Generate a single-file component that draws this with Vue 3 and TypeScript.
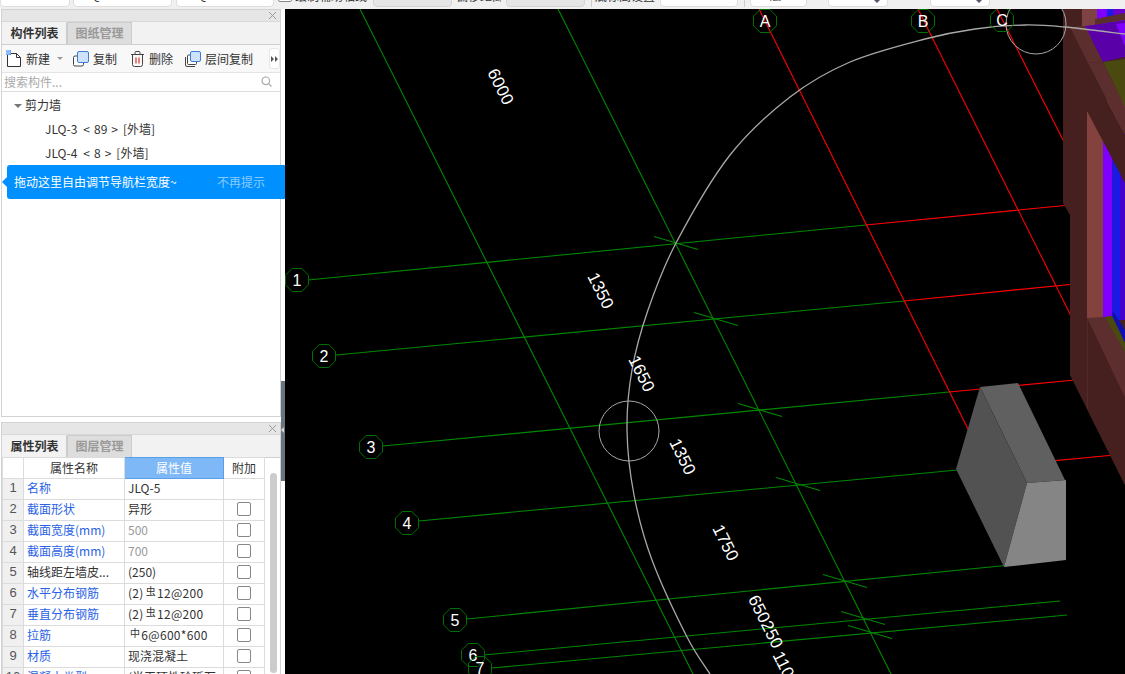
<script setup lang="ts">
interface TopItem {
  kind: string
  width: number
  gap: number
  text?: string
}
interface PropRow {
  no: number
  name: string
  value: string
  prefix?: string
  mark?: string
  link: boolean
  muted?: boolean
  check: boolean
}
type Pt = [number, number]

const topItems: TopItem[] = [
  { kind: 'input', width: 70, gap: 0 },
  { kind: 'input', width: 99, gap: 3, text: 'JLQ-5' },
  { kind: 'input', width: 98, gap: 4, text: '      Q' },
  { kind: 'check', width: 14, gap: 4 },
  { kind: 'label', width: 73, gap: 3, text: '绘制辅助轴线' },
  { kind: 'gray', width: 79, gap: 5 },
  { kind: 'label', width: 45, gap: 4, text: '偏移距离' },
  { kind: 'gray', width: 79, gap: 5 },
  { kind: 'sep', width: 1, gap: 6 },
  { kind: 'label', width: 60, gap: 3, text: '底标高设置' },
  { kind: 'input', width: 78, gap: 5 },
  { kind: 'sep', width: 1, gap: 6 },
  { kind: 'input', width: 57, gap: 5, text: '  4 层' },
  { kind: 'select', width: 60, gap: 21 },
  { kind: 'select', width: 60, gap: 42 }
]

const rows: PropRow[] = [
  { no: 1, name: '名称', value: 'JLQ-5', link: true, check: false },
  { no: 2, name: '截面形状', value: '异形', link: true, check: true },
  { no: 3, name: '截面宽度(mm)', value: '500', link: true, muted: true, check: true },
  { no: 4, name: '截面高度(mm)', value: '700', link: true, muted: true, check: true },
  { no: 5, name: '轴线距左墙皮...', value: '(250)', link: false, check: true },
  { no: 6, name: '水平分布钢筋', value: '12@200', prefix: '(2)', mark: '虫', link: true, check: true },
  { no: 7, name: '垂直分布钢筋', value: '12@200', prefix: '(2)', mark: '虫', link: true, check: true },
  { no: 8, name: '拉筋', value: '6@600*600', mark: '中', link: true, check: true },
  { no: 9, name: '材质', value: '现浇混凝土', link: true, check: true },
  { no: 10, name: '混凝土类型', value: '(半干硬性砼砾石...', link: true, check: true }
]

const gridLabels = [
  { t: 'A', x: 765, y: 21 },
  { t: 'B', x: 923, y: 21 },
  { t: 'C', x: 1002, y: 20 },
  { t: '1', x: 297, y: 280 },
  { t: '2', x: 324, y: 356 },
  { t: '3', x: 371, y: 447 },
  { t: '4', x: 407, y: 523 },
  { t: '5', x: 455, y: 620 },
  { t: '6', x: 473, y: 655 },
  { t: '7', x: 480, y: 668 }
]

const greenLines: number[][] = [
  [360, 9, 693, 674],
  [558, 9, 891, 674],
  [308, 280, 866, 225],
  [336, 355, 904, 301],
  [383, 446, 949, 392],
  [419, 521, 989, 467],
  [467, 619, 1030, 563],
  [484, 655, 1060, 601],
  [492, 668, 1067, 615]
]

const redLines: number[][] = [
  [759, 9, 970, 433],
  [918, 9, 1072, 318],
  [997, 9, 1066, 146],
  [866, 225, 1070, 205],
  [904, 301, 1075, 284],
  [949, 392, 1075, 380],
  [989, 467, 1125, 454]
]

const ticks: Pt[] = [
  [676, 243],
  [716, 319],
  [760, 410],
  [798, 484],
  [845, 581],
  [863, 618],
  [870, 632]
]

const dims = [
  { t: '6000', x: 500, y: 87 },
  { t: '1350', x: 600, y: 291 },
  { t: '1650', x: 641, y: 374 },
  { t: '1350', x: 682, y: 457 },
  { t: '1750', x: 725, y: 543 },
  { t: '650250', x: 765, y: 622 },
  { t: '1100', x: 785, y: 669 }
]

// arc through points read off the picture, smoothed with catmull-rom
const arcPts: Pt[] = [
  [1125, 34], [1065, 27], [1025, 25], [975, 29], [925, 39], [850, 62], [790, 97],
  [730, 155], [676, 243], [648, 310], [632, 370], [627, 430], [634, 495],
  [652, 560], [687, 637], [710, 674]
]

const arcPath = arcPts.reduce((d, p, i) => {
  if (i === 0) return `M${p[0]} ${p[1]}`
  const a = arcPts[Math.max(i - 2, 0)]
  const b = arcPts[i - 1]
  const c = arcPts[Math.min(i + 1, arcPts.length - 1)]
  const c1x = b[0] + (p[0] - a[0]) / 6
  const c1y = b[1] + (p[1] - a[1]) / 6
  const c2x = p[0] - (c[0] - b[0]) / 6
  const c2y = p[1] - (c[1] - b[1]) / 6
  return `${d} C${c1x} ${c1y} ${c2x} ${c2y} ${p[0]} ${p[1]}`
}, '')

const octagon = (x: number, y: number) => {
  const pts: string[] = []
  for (let i = 0; i < 8; i++) {
    const a = (Math.PI / 4) * i + Math.PI / 8
    pts.push(`${(x + 12.5 * Math.cos(a)).toFixed(1)},${(y + 12.5 * Math.sin(a)).toFixed(1)}`)
  }
  return pts.join(' ')
}
</script>

<template>
  <div class="app">
    <div class="topbar">
      <div class="top-row">
        <div
          v-for="(item, i) in topItems"
          :key="i"
          class="top-item"
          :class="item.kind"
          :style="{ width: item.width + 'px', marginLeft: item.gap + 'px' }"
        >
          {{ item.text }}
          <i v-if="item.kind === 'select'" class="caret"></i>
        </div>
      </div>
    </div>

    <div class="main">
      <aside class="sidebar">
        <section class="panel panel-list">
          <div class="panel-head">
            <svg class="close" width="9" height="9" viewBox="0 0 9 9"><path d="M1 1l7 7M8 1l-7 7" /></svg>
          </div>
          <div class="tabs">
            <div class="tab active">构件列表</div>
            <div class="tab">图纸管理</div>
          </div>
          <div class="actions">
            <button class="act act-new">
              <svg width="16" height="18" viewBox="0 0 16 18">
                <path d="M1.500 3.500h9l4 4v9h-13z" fill="#fff" stroke="#333" />
                <path d="M10.500 3.500v4h4" fill="none" stroke="#333" />
                <rect x="0" y="0" width="5" height="5" fill="#3d8bf0" />
                <path d="M1 0v5M3 0v5M0 1h5M0 3h5" stroke="#cfe3ff" stroke-width=".7" />
              </svg>
              新建<i class="drop"></i>
            </button>
            <button class="act act-copy">
              <svg width="16" height="16" viewBox="0 0 16 16">
                <rect x=".5" y="5" width="10" height="10" rx="1.500" fill="#fff" stroke="#444" />
                <rect x="4.500" y=".5" width="11" height="11" rx="1.500" fill="#cfe2fb" stroke="#3b7dd8" />
              </svg>
              复制
            </button>
            <button class="act act-del">
              <svg width="15" height="16" viewBox="0 0 15 16">
                <path d="M1 3.500h13M5 3.500V1.500a1 1 0 0 1 1-1h3a1 1 0 0 1 1 1v2M2.500 3.500v10a2 2 0 0 0 2 2h6a2 2 0 0 0 2-2v-10" fill="none" stroke="#444" />
                <path d="M6 6.500v6M9 6.500v6" stroke="#d9342b" stroke-width="1.200" />
              </svg>
              删除
            </button>
            <button class="act act-floor">
              <svg width="16" height="16" viewBox="0 0 16 16">
                <path d="M.5 6v8a1.500 1.500 0 0 0 1.500 1.500h8" fill="none" stroke="#444" />
                <rect x="2.500" y="4" width="9" height="9.500" rx="1" fill="#fff" stroke="#444" />
                <rect x="5.500" y=".5" width="10" height="10" rx="1.500" fill="#cfe2fb" stroke="#3b7dd8" />
              </svg>
              层间复制
            </button>
            <span class="more">
              <svg width="7" height="6" viewBox="0 0 7 6"><path d="M0 0l3 3-3 3zM4 0l3 3-3 3z" /></svg>
            </span>
          </div>
          <div class="search">
            <span>搜索构件...</span>
            <svg width="11" height="11" viewBox="0 0 11 11">
              <circle cx="4.800" cy="4.800" r="3.800" />
              <path d="M7.700 7.700l2.800 2.800" />
            </svg>
          </div>
          <div class="tree">
            <div class="tree-group"><i class="tree-arrow"></i>剪力墙</div>
            <div class="tree-item"><span>JLQ-3</span><span class="qty">&lt;<span>89</span>&gt;</span><span>[外墙]</span></div>
            <div class="tree-item"><span>JLQ-4</span><span class="qty">&lt;<span>8</span>&gt;</span><span>[外墙]</span></div>
          </div>
        </section>

        <section class="panel panel-props">
          <div class="panel-head">
            <svg class="close" width="9" height="9" viewBox="0 0 9 9"><path d="M1 1l7 7M8 1l-7 7" /></svg>
          </div>
          <div class="tabs">
            <div class="tab active">属性列表</div>
            <div class="tab">图层管理</div>
          </div>
          <div class="prop-body">
            <table class="props">
              <colgroup>
                <col class="c-no" />
                <col class="c-name" />
                <col class="c-val" />
                <col class="c-add" />
              </colgroup>
              <thead>
                <tr>
                  <th class="no-head"></th>
                  <th>属性名称</th>
                  <th class="val-head">属性值</th>
                  <th>附加</th>
                </tr>
              </thead>
              <tbody>
                <tr v-for="row in rows" :key="row.no">
                  <td class="no">{{ row.no }}</td>
                  <td class="name" :class="{ link: row.link }">{{ row.name }}</td>
                  <td class="val" :class="{ muted: row.muted }">
                    <template v-if="row.mark">
                      <span class="rebar">{{ row.prefix }}<sup>{{ row.mark }}</sup>{{ row.value }}</span>
                    </template>
                    <template v-else>{{ row.value }}</template>
                  </td>
                  <td class="add"><span v-if="row.check" class="box"></span></td>
                </tr>
              </tbody>
            </table>
            <div class="track"><div class="thumb"></div></div>
          </div>
        </section>

        <div class="hint">
          <span>拖动这里自由调节导航栏宽度~</span>
          <span class="hint-off">不再提示</span>
        </div>
        <div class="handle"></div>
      </aside>

      <div class="canvas">
        <svg width="840" height="665" viewBox="285 9 840 665">
          <rect x="285" y="9" width="840" height="665" fill="#000" />
          <line v-for="(l, i) in greenLines" :key="'g' + i" :x1="l[0]" :y1="l[1]" :x2="l[2]" :y2="l[3]" class="green" />
          <line v-for="(l, i) in redLines" :key="'r' + i" :x1="l[0]" :y1="l[1]" :x2="l[2]" :y2="l[3]" class="red" />
          <line
            v-for="(t, i) in ticks"
            :key="'t' + i"
            :x1="t[0] - 22"
            :y1="t[1] - 6.500"
            :x2="t[0] + 22"
            :y2="t[1] + 6.500"
            class="green"
          />

          <!-- wall on the right -->
          <polygon points="1063,9 1125,9 1125,485 1070,375 1070,215 1063,203" fill="#45201f" />
          <rect x="1082" y="9" width="15" height="30" fill="#7f4242" />
          <rect x="1097" y="9" width="10" height="20" fill="#8000ff" />
          <rect x="1107" y="9" width="6" height="20" fill="#1a1ae6" />
          <rect x="1113" y="9" width="12" height="20" fill="#6a00d0" />
          <polygon points="1095,19 1125,13 1125,20 1095,25" fill="#5a2e2d" />
          <rect x="1087" y="100" width="38" height="220" fill="#84423f" />
          <rect x="1103" y="130" width="22" height="190" fill="#8000ff" />
          <rect x="1112" y="130" width="1" height="190" fill="#3a10c0" />
          <rect x="1113" y="130" width="7" height="190" fill="#1a1ae6" />
          <rect x="1120" y="130" width="5" height="190" fill="#4400cc" />
          <polygon points="1112,316 1113,311 1125,330 1125,343" fill="#1010b0" />
          <polygon points="1070,27 1085,26 1103,62 1088,63" fill="#5c2e2e" />
          <polygon points="1085,26 1125,21 1125,57 1103,62" fill="#5a00a8" />
          <polygon points="1116,24 1125,23 1125,46" fill="#8000ff" />
          <polygon points="1103,62 1125,59 1125,107" fill="#4a4a10" />
          <polygon points="1088,63 1103,62 1125,107 1125,135" fill="#5c2e2e" />
          <polygon points="1087,63 1125,135 1125,183 1087,111" fill="#45201f" />
          <polygon points="1087,318 1105,317 1112,316 1125,343 1125,398" fill="#5c2e2e" />
          <polygon points="1105,317 1112,316 1125,343 1125,352" fill="#4a4a10" />
          <polygon points="1087,318 1125,398 1125,485 1087,409" fill="#45201f" />
          <line x1="1087.500" y1="318" x2="1087.500" y2="409" stroke="#522a2a" />

          <!-- gray block -->
          <polygon points="980,387 1018,383 1065,480 1027,483" fill="#606060" />
          <polygon points="980,387 1027,483 1004,567 956,469" fill="#525252" />
          <polygon points="1027,483 1066,480 1066,560 1004,567" fill="#858585" />

          <path :d="arcPath" class="arc" />
          <circle cx="629" cy="431" r="30" class="ring" />
          <circle cx="1036" cy="24" r="30" class="ring" />

          <g v-for="g in gridLabels" :key="g.t">
            <polygon :points="octagon(g.x, g.y)" class="oct" />
            <text :x="g.x" :y="g.y + 6" class="axis-text">{{ g.t }}</text>
          </g>
          <text
            v-for="d in dims"
            :key="d.t + d.x"
            :x="d.x"
            :y="d.y + 5"
            :transform="`rotate(63.4 ${d.x} ${d.y})`"
            class="dim-text"
          >{{ d.t }}</text>
        </svg>
      </div>
    </div>
  </div>
</template>

<style scoped>
.app {
  width: 1125px;
  height: 674px;
  overflow: hidden;
  display: flex;
  flex-direction: column;
  font-family: "Noto Sans CJK SC", "Liberation Sans", sans-serif;
  font-size: 12px;
  color: #333;
  background: #fff;
}

.topbar {
  height: 9px;
  flex: none;
  overflow: hidden;
  background: #f0f0f0;
}

.top-row {
  display: flex;
  align-items: flex-end;
  height: 7px;
}

.top-item {
  flex: none;
  box-sizing: border-box;
  height: 24px;
  line-height: 13px;
  white-space: pre;
  overflow: hidden;
  position: relative;
  display: flex;
  align-items: flex-end;
  font-size: 12px;
}

.top-item.input,
.top-item.select {
  background: #fff;
  border: 1px solid #ddd;
  border-radius: 4px;
  padding: 0 0 5px 4px;
}

.top-item.gray {
  background: #e6e6e6;
  border: 1px solid #d4d4d4;
  border-radius: 4px;
}

.top-item.check {
  height: 13px;
  margin-bottom: 5px;
  border: 1px solid #888;
  border-radius: 2px;
  background: #fff;
}

.top-item.label {
  margin-bottom: 5px;
  height: 14px;
}

.top-item.sep {
  height: 20px;
  background: #ccc;
}

.caret {
  position: absolute;
  right: 7px;
  bottom: 3px;
  border: 3px solid transparent;
  border-top: 3px solid #556;
  border-bottom: 0;
}

.main {
  flex: 1;
  display: flex;
  min-height: 0;
}

.sidebar {
  position: relative;
  flex: none;
  box-sizing: border-box;
  width: 285px;
  padding: 0 4px 0 1px;
  display: flex;
  flex-direction: column;
  gap: 5px;
  background: #fff;
}

.panel {
  box-sizing: border-box;
  border: 1px solid #d2d2d2;
  overflow: hidden;
  background: #fff;
}

.panel-list {
  height: 408px;
  flex: none;
}

.panel-props {
  flex: 1;
  min-height: 0;
  border-bottom: 0;
}

.panel-head {
  height: 11px;
  background: #e6e6e6;
  border-bottom: 1px solid #d8d8d8;
  display: flex;
  justify-content: flex-end;
  align-items: center;
  padding-right: 3px;
}

.close path {
  stroke: #999;
  fill: none;
  stroke-width: 1;
}

.tabs {
  display: flex;
  height: 23px;
  background: #f2f2f2;
  border-bottom: 1px solid #cfcfcf;
  box-sizing: border-box;
}

.tab {
  width: 65px;
  box-sizing: border-box;
  text-align: center;
  line-height: 19px;
  color: #999;
  font-weight: 700;
  background: #dddddd;
  border: 1px solid #cccccc;
  border-bottom: 0;
}

.tab.active {
  background: #f2f2f2;
  color: #333;
  border-color: #f2f2f2;
  border-right-color: #ccc;
}

.actions {
  height: 27px;
  background: #f8f8f8;
  border-bottom: 1px solid #e4e4e4;
  display: flex;
  align-items: center;
  padding-left: 4px;
}

.act {
  appearance: none;
  border: 0;
  padding: 0;
  background: none;
  font: inherit;
  color: #333;
  display: flex;
  align-items: center;
  gap: 4px;
  flex: none;
}

.act-copy {
  margin-left: 10px;
}

.act-del {
  margin-left: 13px;
}

.act-floor {
  margin-left: 12px;
}

.drop {
  width: 0;
  height: 0;
  margin-left: 3px;
  border: 3px solid transparent;
  border-top: 3px solid #999;
  border-bottom: 0;
}

.more {
  margin-left: 16px;
  flex: none;
  width: 9px;
  height: 19px;
  border: 1px solid #e6e6e6;
  border-radius: 3px;
  background: #fff;
  display: flex;
  align-items: center;
  justify-content: center;
}

.more path {
  fill: #555;
}

.search {
  height: 19px;
  box-sizing: border-box;
  border-bottom: 1px solid #ddd;
  display: flex;
  align-items: center;
  justify-content: space-between;
  padding: 0 8px 2px 2px;
  color: #aaa;
}

.search circle,
.search path {
  fill: none;
  stroke: #aaa;
  stroke-width: 1.200;
}

.tree {
  padding-top: 1px;
}

.tree-group {
  height: 24px;
  line-height: 24px;
  padding-left: 12px;
  display: flex;
  align-items: center;
  gap: 3px;
}

.tree-arrow {
  width: 0;
  height: 0;
  border: 4px solid transparent;
  border-top: 4px solid #777;
  border-bottom: 0;
  margin-top: 1px;
}

.tree-item {
  height: 24px;
  line-height: 24px;
  padding-left: 43px;
  display: flex;
  gap: 5px;
}

.qty {
  margin-left: 1px;
}

.qty span {
  padding: 0 4px;
}

.prop-body {
  display: flex;
  height: 240px;
}

.props {
  width: 262px;
  flex: none;
  table-layout: fixed;
  border-collapse: collapse;
  align-self: flex-start;
  margin-top: -1px;
}

.c-no {
  width: 21px;
}

.c-name {
  width: 101px;
}

.c-val {
  width: 99px;
}

.c-add {
  width: 41px;
}

.props th,
.props td {
  height: 20px;
  padding: 0;
  border: 1px solid #dcdcdc;
  font-weight: 400;
  line-height: 20px;
  white-space: nowrap;
  overflow: hidden;
}

.props td {
  line-height: 18px;
  height: 18px;
  padding-bottom: 2px;
}

.props th {
  text-align: center;
  background: #fff;
}

.props th.val-head {
  background: #7eb8f7;
  color: #fff;
  border-color: #5a9ee8;
}

.props td.no {
  text-align: center;
  background: #f0f0f0;
  color: #555;
  font-family: "Liberation Sans", sans-serif;
  font-size: 13px;
}

.props td.name,
.props td.val {
  padding-left: 3px;
}

.name.link {
  color: #2a62e6;
}

.val.muted {
  color: #999;
}

.rebar {
  letter-spacing: 0.300px;
}

.rebar sup {
  font-size: 10px;
  line-height: 0;
  vertical-align: 3px;
  margin: 0 1px 0 2px;
}

.props td.add {
  text-align: center;
}

.box {
  display: inline-block;
  width: 12px;
  height: 12px;
  vertical-align: -2px;
  border: 1px solid #888;
  border-radius: 2px;
  background: #fff;
}

.track {
  flex: 1;
  padding: 15px 3px 0 5px;
  box-sizing: border-box;
}

.thumb {
  height: 200px;
  border-radius: 4px;
  background: #cccccc;
}

.hint {
  position: absolute;
  top: 156px;
  left: 7px;
  width: 278px;
  height: 34px;
  box-sizing: border-box;
  padding: 0 20px 2px 7px;
  border-radius: 3px 0 0 3px;
  background: #0090ff;
  color: #fff;
  display: flex;
  align-items: center;
  justify-content: space-between;
}

.hint::before {
  content: "";
  position: absolute;
  left: -5px;
  top: 12px;
  border: 5px solid transparent;
  border-right: 5px solid #0090ff;
  border-left: 0;
}

.hint-off {
  color: rgba(255, 255, 255, 0.55);
}

.handle {
  position: absolute;
  left: 281px;
  top: 372px;
  width: 4px;
  height: 100px;
  background: #6b7580;
}

.handle::before {
  content: "";
  position: absolute;
  left: 0;
  top: 46px;
  border: 3px solid transparent;
  border-right: 3px solid #cfd4d9;
  border-left: 0;
}

.canvas {
  flex: 1;
  min-width: 0;
  background: #000;
}

.canvas svg {
  display: block;
}

.green {
  stroke: #008800;
  stroke-width: 1.100;
}

.red {
  stroke: #ff0000;
  stroke-width: 1.100;
}

.arc {
  fill: none;
  stroke: #a8a8a8;
  stroke-width: 1.300;
}

.ring {
  fill: none;
  stroke: #a8a8a8;
  stroke-width: 1;
}

.oct {
  fill: none;
  stroke: #007000;
  stroke-width: 1;
}

.axis-text {
  fill: #fff;
  font-family: "Liberation Sans", sans-serif;
  font-size: 16px;
  text-anchor: middle;
}

.dim-text {
  fill: #fff;
  font-family: "Liberation Sans", sans-serif;
  font-size: 17px;
  text-anchor: middle;
}
</style>

<style>
html,
body {
  overflow: hidden;
}
</style>
